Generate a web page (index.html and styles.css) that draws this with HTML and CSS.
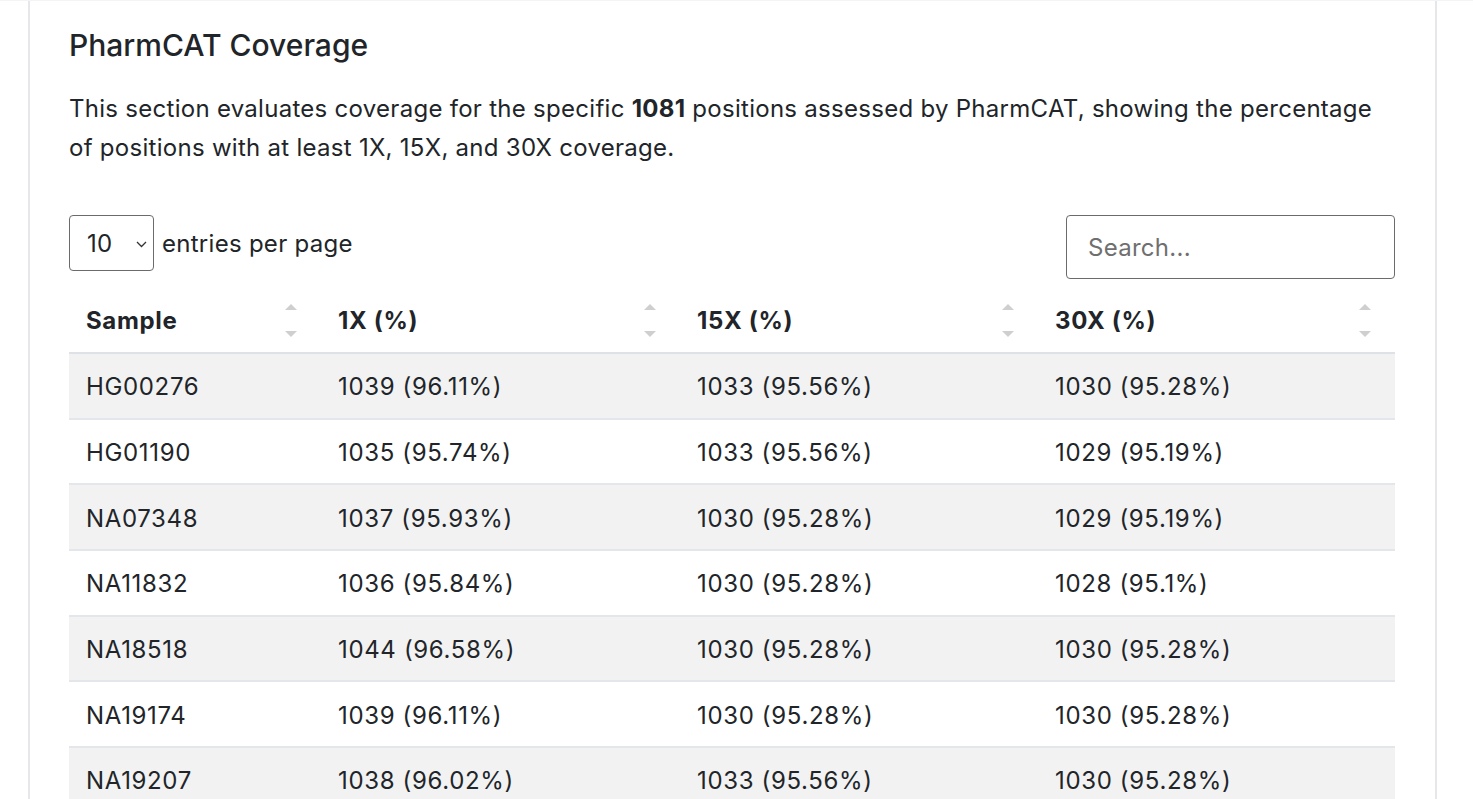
FILE: index.html
```html
<!DOCTYPE html>
<html lang="en">
<head>
<meta charset="utf-8">
<title>PharmCAT Coverage</title>
<link rel="stylesheet" href="styles.css">
</head>
<body>
<div class="page">
  <section class="card">
    <h2 class="title">PharmCAT Coverage</h2>
    <p class="desc">This section evaluates coverage for the specific <strong>1081</strong> positions assessed by PharmCAT, showing the percentage of positions with at least 1X, 15X, and 30X coverage.</p>
    <div class="controls">
      <label class="per-page">
        <span class="select"><span class="select-val">10</span><svg class="chev" width="11" height="7" viewBox="0 0 11 7"><path d="M1 1l4.5 4.5L10 1" fill="none" stroke="#333" stroke-width="1.3"/></svg></span>
        <span>entries per page</span>
      </label>
      <div class="search">Search...</div>
    </div>
    <table class="tbl">
      <colgroup><col class="c1"><col class="c2"><col class="c3"><col class="c4"></colgroup>
      <thead>
        <tr>
          <th><span class="th-in">Sample<span class="sort"><i class="up"></i><i class="down"></i></span></span></th>
          <th><span class="th-in">1X (%)<span class="sort"><i class="up"></i><i class="down"></i></span></span></th>
          <th><span class="th-in">15X (%)<span class="sort"><i class="up"></i><i class="down"></i></span></span></th>
          <th><span class="th-in">30X (%)<span class="sort"><i class="up"></i><i class="down"></i></span></span></th>
        </tr>
      </thead>
      <tbody>
        <tr><td>HG00276</td><td>1039 (96.11%)</td><td>1033 (95.56%)</td><td>1030 (95.28%)</td></tr>
        <tr><td>HG01190</td><td>1035 (95.74%)</td><td>1033 (95.56%)</td><td>1029 (95.19%)</td></tr>
        <tr><td>NA07348</td><td>1037 (95.93%)</td><td>1030 (95.28%)</td><td>1029 (95.19%)</td></tr>
        <tr><td>NA11832</td><td>1036 (95.84%)</td><td>1030 (95.28%)</td><td>1028 (95.1%)</td></tr>
        <tr><td>NA18518</td><td>1044 (96.58%)</td><td>1030 (95.28%)</td><td>1030 (95.28%)</td></tr>
        <tr><td>NA19174</td><td>1039 (96.11%)</td><td>1030 (95.28%)</td><td>1030 (95.28%)</td></tr>
        <tr><td>NA19207</td><td>1038 (96.02%)</td><td>1033 (95.56%)</td><td>1030 (95.28%)</td></tr>
      </tbody>
    </table>
  </section>
</div>
</body>
</html>
```

FILE: styles.css
```css
* { box-sizing: border-box; }
html, body { margin: 0; padding: 0; background: #ffffff; }
body {
  font-family: Inter, "Noto Sans", "Liberation Sans", sans-serif;
  color: #212529;
  height: 799px;
  overflow: hidden;
}
.page {
  padding-left: 28px;
  border-top: 1px solid #f3f4f6;
}
.card {
  width: 1409px;
  min-height: 820px;
  border-left: 2px solid #e5e7eb;
  border-right: 2px solid #e5e7eb;
  padding: 27px 39px 0 39px;
}
.title {
  margin: 0;
  font-size: 30px;
  font-weight: 500;
  line-height: 34px;
  letter-spacing: 0;
}
.desc {
  margin: 27px 0 0 0;
  font-size: 24px;
  line-height: 39px;
  letter-spacing: 0.28px;
}
.desc strong { font-weight: 700; }
.controls {
  margin-top: 48px;
  display: flex;
  justify-content: space-between;
  align-items: flex-start;
  width: 1326px;
}
.per-page {
  display: flex;
  align-items: center;
  gap: 8px;
  font-size: 24px;
  letter-spacing: 0.28px;
  height: 56px;
}
.select {
  width: 85px;
  height: 56px;
  border: 1px solid #6b6b6b;
  border-radius: 4px;
  display: flex;
  align-items: center;
  justify-content: space-between;
  padding: 0 6px 0 17px;
}
.select-val { font-size: 24px; }
.chev { display: block; margin-top: 2px; }
.search {
  width: 329px;
  height: 64px;
  border: 1px solid #6b6b6b;
  border-radius: 4px;
  padding: 0 21px;
  display: flex;
  align-items: center;
  font-size: 24px;
  letter-spacing: 0.28px;
  color: #6f6f6f;
}
.tbl {
  width: 1326px;
  border-collapse: collapse;
  table-layout: fixed;
  margin-top: 10px;
  font-size: 24px;
  letter-spacing: 0.65px;
}
.c1 { width: 252px; }
.c2 { width: 359px; }
.c3 { width: 358px; }
.c4 { width: 357px; }
.tbl th {
  text-align: left;
  font-weight: 700;
  height: 64px;
  padding: 0 17px;
  border-bottom: 2px solid #dee2e6;
}
.th-in {
  display: flex;
  align-items: center;
  justify-content: space-between;
}
.sort {
  display: flex;
  flex-direction: column;
  gap: 21px;
  margin-right: 7px;
}
.sort i {
  display: block;
  width: 0;
  height: 0;
  border-left: 6px solid transparent;
  border-right: 6px solid transparent;
}
.sort .up { border-bottom: 6px solid #cfcfcf; }
.sort .down { border-top: 6px solid #cfcfcf; }
.tbl td {
  height: 65.7px;
  padding: 2px 17px 0 17px;
  border-bottom: 2px solid #e3e6ea;
  font-weight: 400;
}
.tbl tbody tr:nth-child(odd) td { background: #f2f2f2; }
```
